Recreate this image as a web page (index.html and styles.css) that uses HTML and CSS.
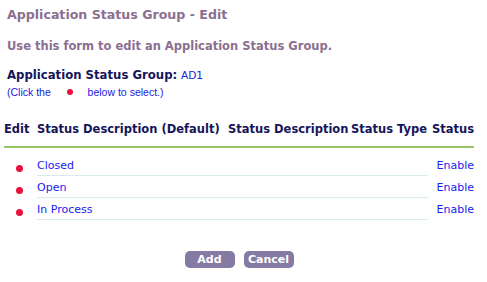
FILE: index.html
```html
<!DOCTYPE html>
<html lang="en">
<head>
<meta charset="UTF-8">
<title>Application Status Group - Edit</title>
<link rel="stylesheet" href="styles.css">
</head>
<body>
<div class="page">
<h1 class="title">Application Status Group - Edit</h1>
<p class="intro">Use this form to edit an Application Status Group.</p>

<div class="group">
<span class="group-label">Application Status Group:</span>
<span class="group-value">AD1</span>
</div>
<div class="hint">(Click the <span class="dot"></span> below to select.)</div>

<table class="status-table">
<colgroup>
<col class="w-edit">
<col class="w-default">
<col class="w-desc">
<col class="w-type">
<col class="w-status">
</colgroup>
<thead>
<tr>
<th>Edit</th>
<th>Status Description (Default)</th>
<th>Status Description</th>
<th>Status Type</th>
<th class="col-status">Status</th>
</tr>
</thead>
<tbody>
<tr class="first">
<td class="col-edit"><span class="dot"></span></td>
<td class="line"><a href="#">Closed</a></td>
<td class="line"></td>
<td class="line"></td>
<td class="col-status"><a href="#">Enable</a></td>
</tr>
<tr>
<td class="col-edit"><span class="dot"></span></td>
<td class="line"><a href="#">Open</a></td>
<td class="line"></td>
<td class="line"></td>
<td class="col-status"><a href="#">Enable</a></td>
</tr>
<tr>
<td class="col-edit"><span class="dot"></span></td>
<td class="line"><a href="#">In Process</a></td>
<td class="line"></td>
<td class="line"></td>
<td class="col-status"><a href="#">Enable</a></td>
</tr>
</tbody>
</table>

<div class="buttons">
<button class="btn">Add</button>
<button class="btn">Cancel</button>
</div>
</div>
</body>
</html>
```

FILE: styles.css
```css
body {
margin: 0;
padding: 0;
background: #fff;
font-family: "DejaVu Sans", Verdana, sans-serif;
}
.page {
padding: 7px 13px 0 4px;
}
.title {
margin: 0 0 0 3px;
font-size: 12.6px;
line-height: 16px;
color: #8b6f90;
}
.intro {
margin: 15px 0 0 3px;
font-size: 11.5px;
line-height: 16px;
font-weight: bold;
color: #8b6f90;
}
.group {
margin: 13px 0 0 3px;
font-size: 11.7px;
line-height: 16px;
}
.group-label {
font-weight: bold;
color: #15155a;
}
.group-value {
font-size: 10.6px;
color: #2020e0;
}
.hint {
margin: 2px 0 0 3px;
font-family: "Liberation Sans", Arial, sans-serif;
font-size: 10.5px;
line-height: 14px;
color: #2020e0;
}
.hint .dot {
width: 6px;
height: 6px;
margin: 0 12px 0 13px;
}
.dot {
display: inline-block;
width: 7px;
height: 7px;
border-radius: 50%;
background: #e8103c;
vertical-align: 1px;
}
.status-table {
width: 470px;
table-layout: fixed;
margin-top: 23px;
border-collapse: collapse;
font-size: 11px;
}
.w-edit { width: 33px; }
.w-default { width: 191px; }
.w-desc { width: 123px; }
.w-type { width: 77px; }
.w-status { width: 46px; }
.status-table th {
text-align: left;
color: #15155a;
font-size: 11.5px;
font-weight: bold;
line-height: 14px;
padding: 0 0 10px 0;
border-bottom: 2px solid #99c466;
white-space: nowrap;
overflow: visible;
}
.status-table th.col-status {
padding-left: 4px;
}
.status-table td {
height: 18px;
padding: 0 0 3px 0;
vertical-align: bottom;
line-height: 13px;
border-bottom: 1px solid #fff;
white-space: nowrap;
}
.status-table tr.first td {
height: 24px;
}
.status-table td.line {
border-bottom-color: #d8ecec;
}
.status-table td.col-edit {
padding-left: 12px;
}
.status-table td.col-edit .dot {
vertical-align: -3px;
}
.status-table td.col-status {
text-align: right;
}
.status-table a {
color: #2020f0;
text-decoration: none;
}
.buttons {
display: flex;
justify-content: center;
gap: 9px;
margin-top: 31px;
}
.btn {
width: 50px;
height: 17px;
padding: 0;
border: none;
border-radius: 5px;
background: #857aa3;
color: #fff;
font-family: "DejaVu Sans", Verdana, sans-serif;
font-size: 11px;
font-weight: bold;
}
```
